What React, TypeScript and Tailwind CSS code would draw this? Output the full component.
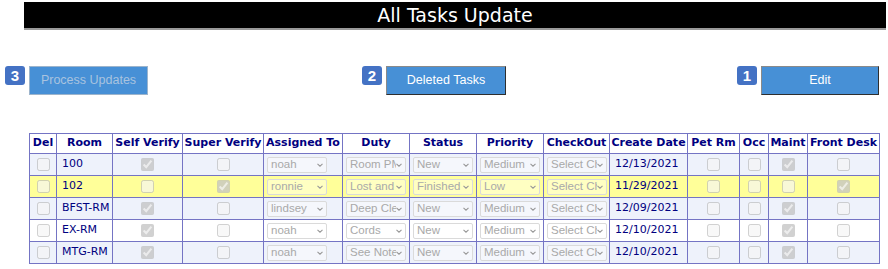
import React from 'react'

interface TaskRow {
  room: string
  selfVerify: boolean
  superVerify: boolean
  assignedTo: string
  duty: string
  status: string
  priority: string
  createDate: string
  petRm: boolean
  occ: boolean
  maint: boolean
  frontDesk: boolean
  bg: string
}

const rows: TaskRow[] = [
  { room: '100', selfVerify: true, superVerify: false, assignedTo: 'noah', duty: 'Room PM', status: 'New', priority: 'Medium', createDate: '12/13/2021', petRm: false, occ: false, maint: true, frontDesk: false, bg: 'bg-[#eef2fb]' },
  { room: '102', selfVerify: false, superVerify: true, assignedTo: 'ronnie', duty: 'Lost and Found', status: 'Finished', priority: 'Low', createDate: '11/29/2021', petRm: false, occ: false, maint: false, frontDesk: true, bg: 'bg-[#ffff99]' },
  { room: 'BFST-RM', selfVerify: true, superVerify: false, assignedTo: 'lindsey', duty: 'Deep Clean', status: 'New', priority: 'Medium', createDate: '12/09/2021', petRm: false, occ: false, maint: true, frontDesk: false, bg: 'bg-[#eef2fb]' },
  { room: 'EX-RM', selfVerify: true, superVerify: false, assignedTo: 'noah', duty: 'Cords', status: 'New', priority: 'Medium', createDate: '12/10/2021', petRm: false, occ: false, maint: true, frontDesk: false, bg: 'bg-white' },
  { room: 'MTG-RM', selfVerify: true, superVerify: false, assignedTo: 'noah', duty: 'See Notes', status: 'New', priority: 'Medium', createDate: '12/10/2021', petRm: false, occ: false, maint: true, frontDesk: false, bg: 'bg-[#eef2fb]' },
]

const headers = ['Del', 'Room', 'Self Verify', 'Super Verify', 'Assigned To', 'Duty', 'Status', 'Priority', 'CheckOut', 'Create Date', 'Pet Rm', 'Occ', 'Maint', 'Front Desk']
const widths = ['w-[27px]', 'w-[56px]', 'w-[70px]', 'w-[81px]', 'w-[79px]', 'w-[67px]', 'w-[67px]', 'w-[67px]', 'w-[66px]', 'w-[78px]', 'w-[52px]', 'w-[29px]', 'w-[39px]', 'w-[72px]']

const cell = 'border border-[#7474c4] p-0'

function Box({ checked }: { checked: boolean }) {
  return (
    <td className={`${cell} text-center`}>
      <input type="checkbox" disabled defaultChecked={checked} className="align-middle m-0" />
    </td>
  )
}

// disabled dropdown look, drawn by hand so preflight doesn't flatten it
function Pick({ value }: { value: string }) {
  return (
    <td className={`${cell} pl-[3px]`}>
      <div className="w-[60px] h-[16px] border border-[#dadada] rounded-[2px] bg-white/40 flex items-center overflow-hidden">
        <span
          className="flex-1 min-w-0 overflow-hidden whitespace-nowrap pl-[3px] text-[11.5px] leading-none text-[#a9a9a9]"
          style={{ fontFamily: '"Liberation Sans", Arial, sans-serif' }}
        >
          {value}
        </span>
        <svg width="6" height="4" viewBox="0 0 6 4" className="shrink-0 mr-[3px]">
          <path d="M0.5 0.8l2.5 2.4 2.5-2.4" fill="none" stroke="#999" strokeWidth="1.1" />
        </svg>
      </div>
    </td>
  )
}

function Badge({ n }: { n: number }) {
  return (
    <div className="w-[20px] h-[19px] rounded-[3px] bg-[#4472c4] text-white font-bold text-[15px] leading-[19px] text-center mr-[4px]">
      {n}
    </div>
  )
}

export default function App() {
  return (
    <div className="w-[888px] h-[269px] bg-white" style={{ fontFamily: '"DejaVu Sans", Verdana, sans-serif' }}>
      <div className="pt-[2px] pl-[24px]">
        <div className="w-[862px] h-[28px] bg-black border-b-2 border-[#9a9a9a] text-white text-[19px] leading-[26px] text-center">
          All Tasks Update
        </div>
      </div>

      <div
        className="flex items-start pl-[5px] mt-[36px]"
        style={{ fontFamily: '"Liberation Sans", Arial, sans-serif' }}
      >
        <Badge n={3} />
        <button className="w-[119px] h-[29px] bg-[#4790d6] border border-[#9cb4cc] text-[#a9c3df] text-[12.5px]">
          Process Updates
        </button>
        <div className="ml-[214px] flex items-start">
          <Badge n={2} />
          <button className="w-[120px] h-[29px] bg-[#4790d6] border border-[#8a8a8a] border-b-[#2e2e2e] border-r-[#2e2e2e] text-white text-[12.5px]">
            Deleted Tasks
          </button>
        </div>
        <div className="ml-[231px] flex items-start">
          <Badge n={1} />
          <button className="w-[118px] h-[29px] bg-[#4790d6] border border-[#8a8a8a] border-b-[#2e2e2e] border-r-[#2e2e2e] text-white text-[12.5px]">
            Edit
          </button>
        </div>
      </div>

      <table className="ml-[29px] mt-[38px] w-[850px] table-fixed border-collapse text-[11px] text-[#000080]">
        <colgroup>
          {widths.map((w, i) => (
            <col key={i} className={w} />
          ))}
        </colgroup>
        <thead>
          <tr className="h-[20px] bg-white">
            {headers.map((h) => (
              <th key={h} className={`${cell} font-bold text-center whitespace-nowrap`}>
                {h}
              </th>
            ))}
          </tr>
        </thead>
        <tbody>
          {rows.map((r) => (
            <tr key={r.room} className={`h-[22px] ${r.bg}`}>
              <Box checked={false} />
              <td className={`${cell} pl-[5px]`}>{r.room}</td>
              <Box checked={r.selfVerify} />
              <Box checked={r.superVerify} />
              <Pick value={r.assignedTo} />
              <Pick value={r.duty} />
              <Pick value={r.status} />
              <Pick value={r.priority} />
              <Pick value="Select Checkout" />
              <td className={`${cell} pl-[5px]`}>{r.createDate}</td>
              <Box checked={r.petRm} />
              <Box checked={r.occ} />
              <Box checked={r.maint} />
              <Box checked={r.frontDesk} />
            </tr>
          ))}
        </tbody>
      </table>
    </div>
  )
}
